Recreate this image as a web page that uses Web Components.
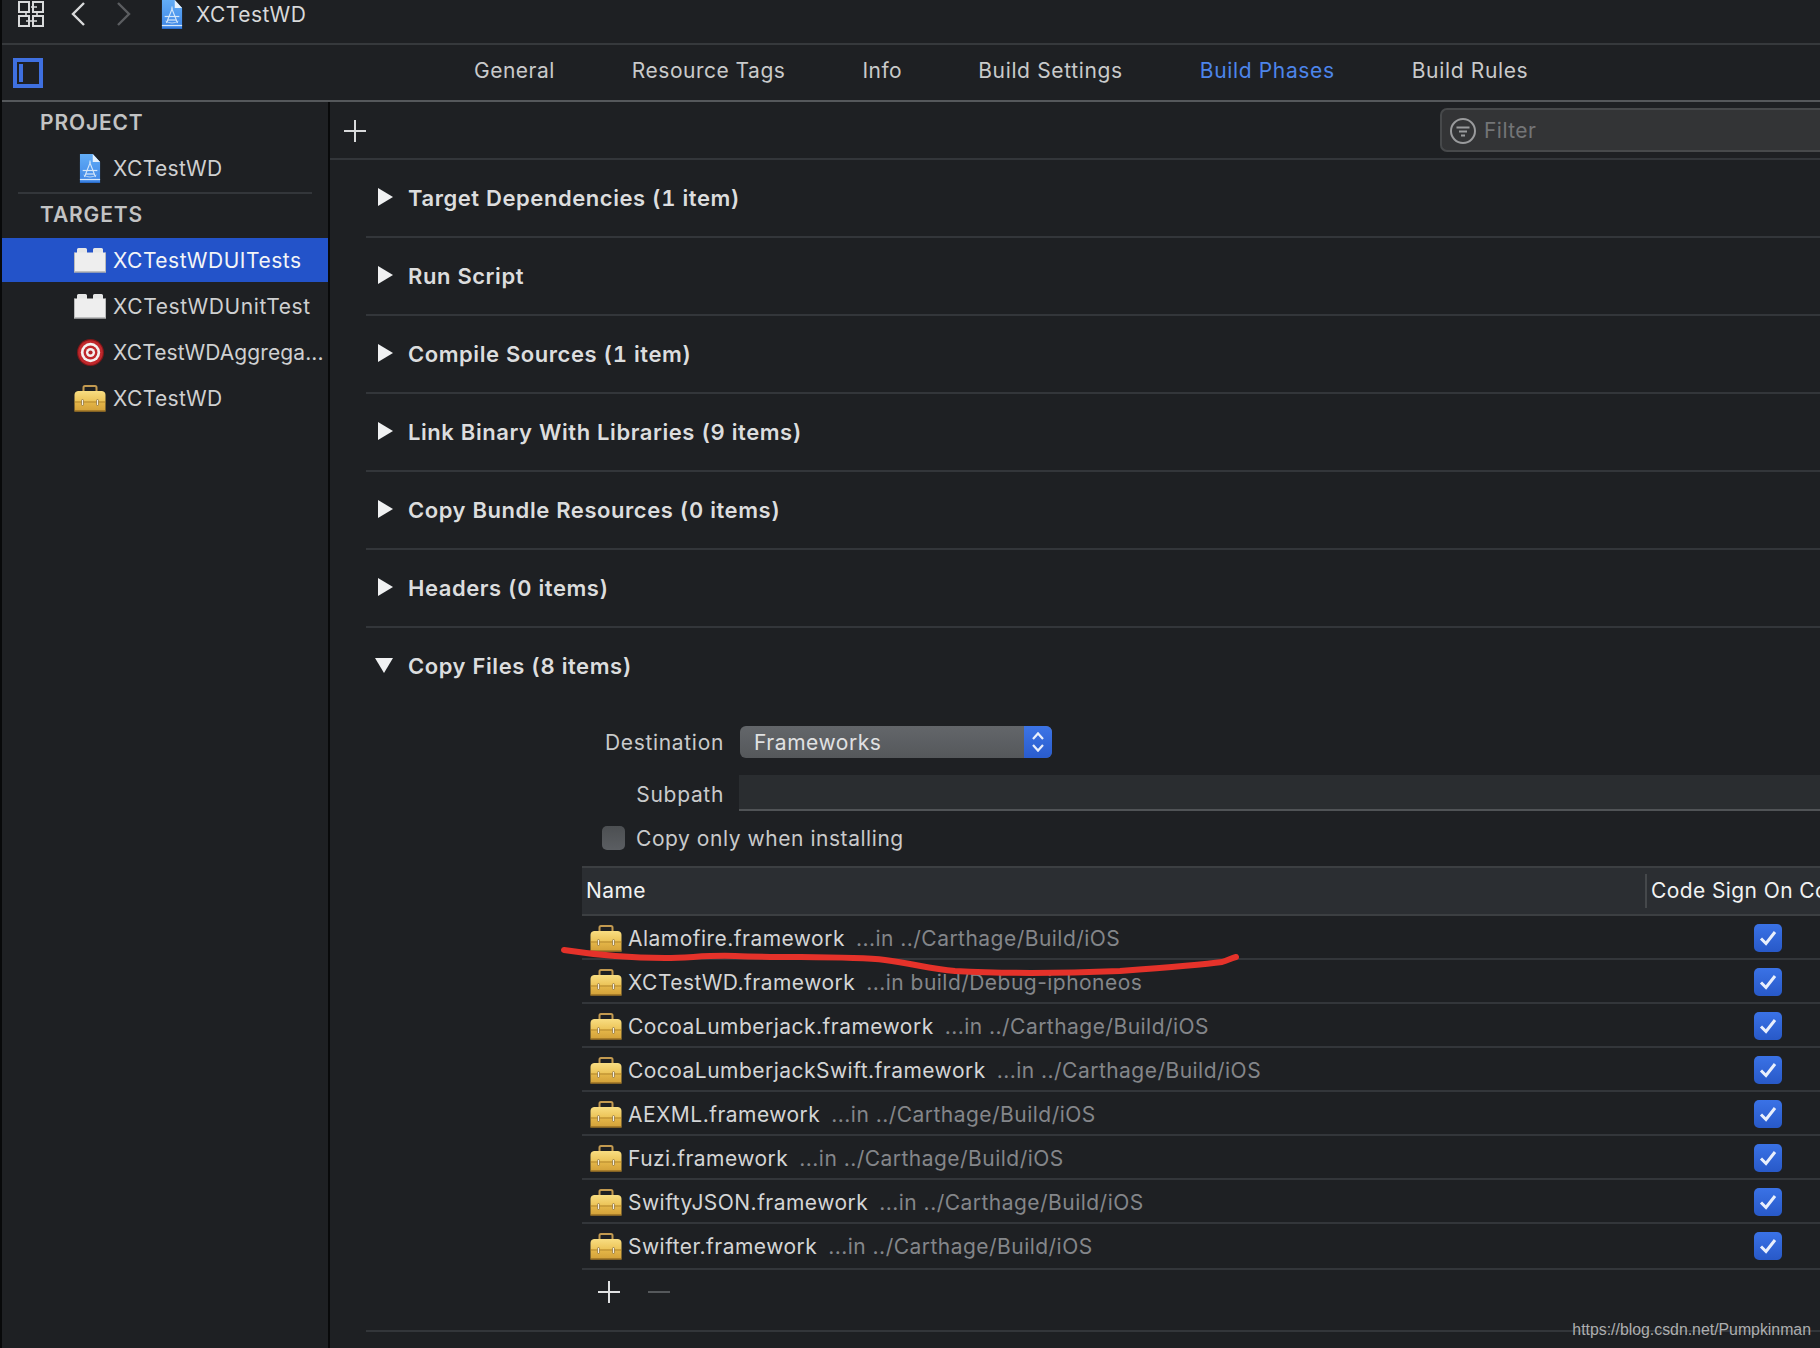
<!DOCTYPE html>
<html lang="en">
<head>
<meta charset="utf-8">
<title>XCTestWD</title>
<style>
html,body{margin:0;padding:0;background:#1e2023;}
body{width:1820px;height:1348px;overflow:hidden;font-family:Inter,"Noto Sans",sans-serif;color:#d6d7d8;}
</style>
</head>
<body>
<xc-app>
  <xc-titlebar slot="title">XCTestWD</xc-titlebar>
  <xc-tabbar slot="tabs">
    <xc-tab>General</xc-tab><xc-tab>Resource Tags</xc-tab><xc-tab>Info</xc-tab><xc-tab style="letter-spacing:.65px;margin-left:-1px">Build Settings</xc-tab><xc-tab active style="letter-spacing:.65px">Build Phases</xc-tab><xc-tab style="letter-spacing:.65px">Build Rules</xc-tab>
  </xc-tabbar>
  <xc-sidebar slot="side">
    <xc-side-head style="height:43px">PROJECT</xc-side-head>
    <xc-side-row icon="file">XCTestWD</xc-side-row>
    <xc-side-rule></xc-side-rule>
    <xc-side-head>TARGETS</xc-side-head>
    <xc-side-row icon="lego" selected style="letter-spacing:.5px">XCTestWDUITests</xc-side-row>
    <xc-side-row icon="lego" style="letter-spacing:.6px">XCTestWDUnitTest</xc-side-row>
    <xc-side-row icon="target" style="letter-spacing:.1px">XCTestWDAggrega...</xc-side-row>
    <xc-side-row icon="box">XCTestWD</xc-side-row>
  </xc-sidebar>
  <xc-toolbar slot="main"></xc-toolbar>
  <xc-phase slot="main">Target Dependencies (1 item)</xc-phase>
  <xc-phase slot="main">Run Script</xc-phase>
  <xc-phase slot="main">Compile Sources (1 item)</xc-phase>
  <xc-phase slot="main">Link Binary With Libraries (9 items)</xc-phase>
  <xc-phase slot="main">Copy Bundle Resources (0 items)</xc-phase>
  <xc-phase slot="main">Headers (0 items)</xc-phase>
  <xc-phase slot="main" open>Copy Files (8 items)
    <xc-copy-form slot="body"></xc-copy-form>
    <xc-file-table slot="body">
      <xc-file-row path="...in ../Carthage/Build/iOS">Alamofire.framework</xc-file-row>
      <xc-file-row path="...in build/Debug-iphoneos">XCTestWD.framework</xc-file-row>
      <xc-file-row path="...in ../Carthage/Build/iOS">CocoaLumberjack.framework</xc-file-row>
      <xc-file-row path="...in ../Carthage/Build/iOS">CocoaLumberjackSwift.framework</xc-file-row>
      <xc-file-row path="...in ../Carthage/Build/iOS">AEXML.framework</xc-file-row>
      <xc-file-row path="...in ../Carthage/Build/iOS">Fuzi.framework</xc-file-row>
      <xc-file-row path="...in ../Carthage/Build/iOS">SwiftyJSON.framework</xc-file-row>
      <xc-file-row path="...in ../Carthage/Build/iOS" style="height:46px;padding-bottom:2px">Swifter.framework</xc-file-row>
    </xc-file-table>
  </xc-phase>
</xc-app>
<script>
const ICONS = {
  file: `<svg width="22" height="29" viewBox="0 0 24 29" preserveAspectRatio="none"><defs><linearGradient id="f" x1="0" y1="0" x2="0" y2="1"><stop offset="0" stop-color="#62adf7"/><stop offset="1" stop-color="#3f86e6"/></linearGradient></defs><path d="M1 0H15L23 8V28.500H1Z" fill="url(#f)"/><path d="M15 0L23 8H15Z" fill="#e6f1fc"/><path d="M1 25.500H23" stroke="#d6e8fa" stroke-width="1.200"/><path d="M1 28.400H23" stroke="#2b6cc8" stroke-width="1.200"/><g fill="none" stroke="#d5e7fa" stroke-width="1.200"><path d="M6 23L12 9L18 23"/><path d="M4 16.500H20"/><path d="M7.500 20H16.500"/><path d="M12 9V6.500"/><path d="M5 21Q12 25 19 21" stroke-width=".8"/></g></svg>`,
  lego: `<svg width="32" height="26" viewBox="0 0 32 26"><path d="M3 6V2.500Q3 1 4.500 1H11.500Q13 1 13 2.500V6H19V2.500Q19 1 20.500 1H27.500Q29 1 29 2.500V6Z" fill="#e6e7e7"/><path d="M0.500 5.500H31.500V25.500H0.500Z" fill="#eeeeee"/><path d="M0.500 25H31.500" stroke="#8d8f90" stroke-width="1"/><path d="M0.500 5.500V25.500M31.500 5.500V25.500" stroke="#b9babb" stroke-width="1"/></svg>`,
  target: `<svg width="27" height="27" viewBox="0 0 28 28"><circle cx="14" cy="14" r="14" fill="#7f1719"/><circle cx="14" cy="14" r="12.800" fill="#c0282c"/><circle cx="14" cy="14" r="10" fill="#f4f0f0"/><circle cx="14" cy="14" r="7.200" fill="#c0272b"/><circle cx="14" cy="14" r="4.700" fill="#f4f0f0"/><circle cx="14" cy="14" r="2.200" fill="#b42327"/></svg>`,
  box: `<svg width="32" height="27" viewBox="0 0 32 27"><defs><linearGradient id="b" x1="0" y1="0" x2="0" y2="1"><stop offset="0" stop-color="#f8dd82"/><stop offset=".5" stop-color="#ecc458"/><stop offset=".5" stop-color="#e6b84a"/><stop offset="1" stop-color="#d2a038"/></linearGradient></defs><path d="M9.500 8V2.500Q9.500 1 11 1H21Q22.500 1 22.500 2.500V8" fill="none" stroke="#c39a50" stroke-width="2"/><path d="M4 6H28Q31.500 6.500 31.500 10V26.500H.500V10Q.500 6.500 4 6Z" fill="url(#b)"/><path d="M.500 26H31.500" stroke="#8a6420" stroke-width="1.200"/><path d="M.500 17H31.500" stroke="#a67d2a" stroke-width=".8"/><rect x="7.500" y="14.500" width="2" height="6" rx="1" fill="#f3efe2" stroke="#7a5d22" stroke-width=".6"/><rect x="22.500" y="14.500" width="2" height="6" rx="1" fill="#f3efe2" stroke="#7a5d22" stroke-width=".6"/></svg>`
};

function define(name, css, html) {
  customElements.define(name, class extends HTMLElement {
    constructor() {
      super();
      this.attachShadow({ mode: 'open' }).innerHTML = `<style>${css}</style>${html}`;
    }
  });
}

define('xc-app', `
  :host{display:flex;flex-direction:column;width:1818px;height:1348px;border-left:2px solid #08090a;position:relative;overflow:hidden;background:#1e2023;}
  .body{display:flex;flex:1;min-height:0;}
  .side{width:326px;flex:none;border-right:2px solid #08090a;}
  .main{flex:1;min-width:0;display:flex;flex-direction:column;}
  .mark{position:absolute;right:9px;top:1319px;font:15.850px/22px "Liberation Sans",Arial,sans-serif;color:#adaeaf;white-space:nowrap;}
  svg.red{position:absolute;left:-2px;top:0;pointer-events:none;}
`, `
  <slot name="title"></slot>
  <slot name="tabs"></slot>
  <div class="body">
    <div class="side"><slot name="side"></slot></div>
    <div class="main"><slot name="main"></slot></div>
  </div>
  <svg class="red" width="1820" height="1348" viewBox="0 0 1820 1348" fill="none">
    <path d="M564 950C590 954 625 958 665 958C690 958 705 955 735 956C790 958 850 956 885 960C915 964 930 969 955 971C1010 974 1070 973 1120 971C1160 968 1200 965 1222 962C1228 960 1232 958 1236 957" stroke="#e5322a" stroke-width="6" stroke-linecap="round" stroke-linejoin="round"/>
  </svg>
  <div class="mark">https://blog.csdn.net/Pumpkinman</div>
`);

define('xc-titlebar', `
  :host{display:flex;align-items:center;height:43px;box-sizing:content-box;border-bottom:2px solid #36393c;padding-left:16px;flex:none;font-size:21px;letter-spacing:.45px;color:#d8d9da;}
  svg{display:block;flex:none;}
  .grid{margin-right:27px;margin-top:-15px;}
  .back{margin-right:32px;margin-top:-15px;}
  .fwd{margin-right:30px;margin-top:-15px;}
  .file{margin-top:-14px;margin-right:13px;}
  span{margin-top:-14px;line-height:28px;}
`, `
  <svg class="grid" width="26" height="26" viewBox="0 0 26 26" fill="none" stroke="#d9dadb" stroke-width="2"><path d="M1 1H11V11H1Z"/><path d="M15 1H25V11H15Z"/><path d="M1 15H11V25H1Z"/><path d="M15 15H25V25H15Z"/><path d="M13 6H19M19 20H8M19 15V11M8 11V15" stroke-width="1.600"/></svg>
  <svg class="back" width="14" height="24" viewBox="0 0 14 24" fill="none" stroke="#d9dadb" stroke-width="2.400"><path d="M13 1L2 12L13 23"/></svg>
  <svg class="fwd" width="14" height="24" viewBox="0 0 14 24" fill="none" stroke="#5b5d60" stroke-width="2.400"><path d="M1 1L12 12L1 23"/></svg>
  <span class="file">${ICONS.file}</span>
  <span><slot></slot></span>
`);

define('xc-tabbar', `
  :host{display:flex;align-items:center;height:55px;border-bottom:2px solid #55585b;flex:none;padding-left:11px;}
  .tog{width:22px;height:22px;border:4px solid #3f70e0;position:relative;flex:none;margin-right:431px;margin-top:1px;}
  .tog::after{content:"";position:absolute;left:2px;top:2px;width:4px;height:18px;background:#3f70e0;}
  .tabs{display:flex;gap:77px;margin-top:-3px;}
`, `<div class="tog"></div><div class="tabs"><slot></slot></div>`);

define('xc-tab', `
  :host{display:block;font-size:21px;line-height:28px;letter-spacing:.5px;color:#c9cacb;white-space:nowrap;}
  :host([active]){color:#4d85ea;}
`, `<slot></slot>`);

define('xc-sidebar', `:host{display:block;}`, `<slot></slot>`);
define('xc-side-head', `
  :host{display:block;height:44px;line-height:42px;padding-left:38px;font-size:21px;font-weight:600;letter-spacing:.85px;color:#c2c3c4;box-sizing:border-box;}
`, `<slot></slot>`);
define('xc-side-rule', `
  :host{display:block;height:2px;margin:1px 16px 0 16px;background:#33363a;}
`, ``);
customElements.define('xc-side-row', class extends HTMLElement {
  constructor() {
    super();
    this.attachShadow({ mode: 'open' }).innerHTML = `<style>
      :host{display:flex;align-items:center;height:46px;box-sizing:border-box;position:relative;color:#cfd0d1;font-size:21px;letter-spacing:.35px;white-space:nowrap;}
      :host([selected]){background:#2353c9;color:#f4f5f7;height:44px;margin-bottom:1px;}
      .i{width:32px;margin:0 7px 0 72px;display:flex;justify-content:center;flex:none;}
    </style><span class="i"></span><slot></slot>`;
  }
  connectedCallback() {
    this.shadowRoot.querySelector('.i').innerHTML = ICONS[this.getAttribute('icon')] || '';
  }
});

define('xc-toolbar', `
  :host{display:flex;align-items:center;height:56px;border-bottom:2px solid #33363a;padding-left:14px;flex:none;position:relative;}
  svg{display:block;flex:none;}
  .plus{margin-top:2px;}
  .filter{margin-left:1074px;width:420px;height:44px;box-sizing:border-box;background:#333436;border:2px solid #47494b;border-right:0;border-radius:7px 0 0 7px;display:flex;align-items:center;padding:2px 0 0 8px;font-size:21px;letter-spacing:.45px;color:#747577;margin-top:-1px;}
  .filter svg{margin-right:8px;}
`, `
  <svg class="plus" width="22" height="22" viewBox="0 0 22 22" stroke="#d9dadb" stroke-width="2"><path d="M11 0V22M0 11H22"/></svg>
  <div class="filter">
    <svg width="26" height="26" viewBox="0 0 26 26" fill="none" stroke="#9a9b9d" stroke-width="2"><circle cx="13" cy="13" r="12"/><path d="M6.500 9.500H19.500M9 13.500H17M11 17.500H15"/></svg>
    Filter
  </div>
`);

customElements.define('xc-phase', class extends HTMLElement {
  constructor() {
    super();
    this.attachShadow({ mode: 'open' }).innerHTML = `<style>
      :host{display:block;margin-left:36px;border-bottom:2px solid #33363a;flex:none;}
      .h{display:flex;align-items:center;height:76px;padding-left:12px;font-size:22px;font-weight:600;letter-spacing:.55px;font-variant-numeric:tabular-nums;color:#dcddde;white-space:nowrap;}
      svg{display:block;flex:none;margin-right:15px;margin-top:-2px;}
      .b{display:none;padding:22px 0 0 216px;}
      :host([open]) .b{display:block;}
    </style>
    <div class="h"><svg width="15" height="18" viewBox="0 0 15 18"><path fill="#f0f1f2" d="M0 0L15 9L0 18Z"/></svg><slot></slot></div>
    <div class="b"><slot name="body"></slot></div>`;
  }
  connectedCallback() {
    if (this.hasAttribute('open')) {
      const svg = this.shadowRoot.querySelector('svg');
      svg.setAttribute('width', '18'); svg.setAttribute('height', '15'); svg.setAttribute('viewBox', '0 0 18 15');
      svg.style.marginRight = '15px'; svg.style.marginLeft = '-3px';
      svg.querySelector('path').setAttribute('d', 'M0 0H18L9 15Z');
    }
  }
});

define('xc-copy-form', `
  :host{display:grid;grid-template-columns:142px 1fr;column-gap:15px;align-items:center;font-size:21px;letter-spacing:.55px;color:#c9cacb;}
  .l{text-align:right;white-space:nowrap;letter-spacing:.68px;}
  .pop{height:32px;width:312px;margin-left:1px;box-sizing:border-box;border-radius:6px;background:linear-gradient(#63666a,#55585b);display:flex;align-items:center;padding-left:14px;position:relative;color:#e0e1e2;overflow:hidden;}
  .st{position:absolute;right:0;top:0;bottom:0;width:28px;background:linear-gradient(#3c74e6,#2a5ccd);display:flex;align-items:center;justify-content:center;}
  .sub{height:36px;margin-top:17px;box-sizing:border-box;background:#2a2d30;border-bottom:2px solid #505356;}
  .l2{margin-top:19px;}
  .chk{grid-column:1 / 3;display:flex;align-items:center;height:24px;margin-top:15px;padding-left:20px;white-space:nowrap;}
  .box{width:23px;height:24px;border-radius:5px;background:linear-gradient(#4c4f52,#5b5e62);margin-right:11px;flex:none;}
`, `
  <div class="l">Destination</div>
  <div class="pop">Frameworks<span class="st"><svg width="14" height="22" viewBox="0 0 14 22" fill="none" stroke="#e8eefb" stroke-width="2.200"><path d="M2 8L7 2.500L12 8M2 14L7 19.500L12 14"/></svg></span></div>
  <div class="l l2">Subpath</div>
  <div class="sub"></div>
  <div class="chk"><span class="box"></span>Copy only when installing</div>
`);

define('xc-file-table', `
  :host{display:block;margin-top:16px;}
  .hd{display:flex;align-items:center;height:46px;background:#2b2e32;border-top:2px solid #3c3f42;border-bottom:2px solid #3c3f42;font-size:21px;letter-spacing:.4px;color:#f1f2f2;}
  .n{width:1063px;padding-left:4px;box-sizing:border-box;flex:none;margin-top:-2px;}
  .c{border-left:2px solid #45484b;height:34px;line-height:34px;padding-left:4px;white-space:nowrap;}
  .ft{display:flex;align-items:flex-start;height:49px;gap:28px;padding:11px 0 0 16px;}
  svg{display:block;}
`, `
  <div class="hd"><div class="n">Name</div><div class="c">Code Sign On Co</div></div>
  <slot></slot>
  <div class="ft">
    <svg width="22" height="22" viewBox="0 0 22 22" stroke="#e0e1e2" stroke-width="2"><path d="M11 0V22M0 11H22"/></svg>
    <svg width="22" height="22" viewBox="0 0 22 22" stroke="#55585b" stroke-width="2"><path d="M0 11H22"/></svg>
  </div>
`);

customElements.define('xc-file-row', class extends HTMLElement {
  constructor() {
    super();
    this.attachShadow({ mode: 'open' }).innerHTML = `<style>
      :host{display:flex;align-items:center;height:44px;padding-top:2px;box-sizing:border-box;border-bottom:2px solid #33363a;font-size:21px;letter-spacing:.47px;color:#d4d5d6;white-space:nowrap;position:relative;}
      .i{width:46px;padding-left:8px;box-sizing:border-box;flex:none;display:flex;}
      .p{color:#84868a;margin-left:11px;}
      .ck{position:absolute;left:1172px;top:8px;width:28px;height:28px;border-radius:5px;background:linear-gradient(#3a72e6,#2859c8);display:flex;align-items:center;justify-content:center;}
    </style><span class="i"></span><slot></slot><span class="p"></span>
    <span class="ck"><svg width="18" height="16" viewBox="0 0 18 16" fill="none" stroke="#e9effc" stroke-width="3"><path d="M2 8.500L7 13.500L16 2"/></svg></span>`;
  }
  connectedCallback() {
    this.shadowRoot.querySelector('.i').innerHTML = ICONS.box;
    this.shadowRoot.querySelector('.p').textContent = this.getAttribute('path');
  }
});
</script>
</body>
</html>
